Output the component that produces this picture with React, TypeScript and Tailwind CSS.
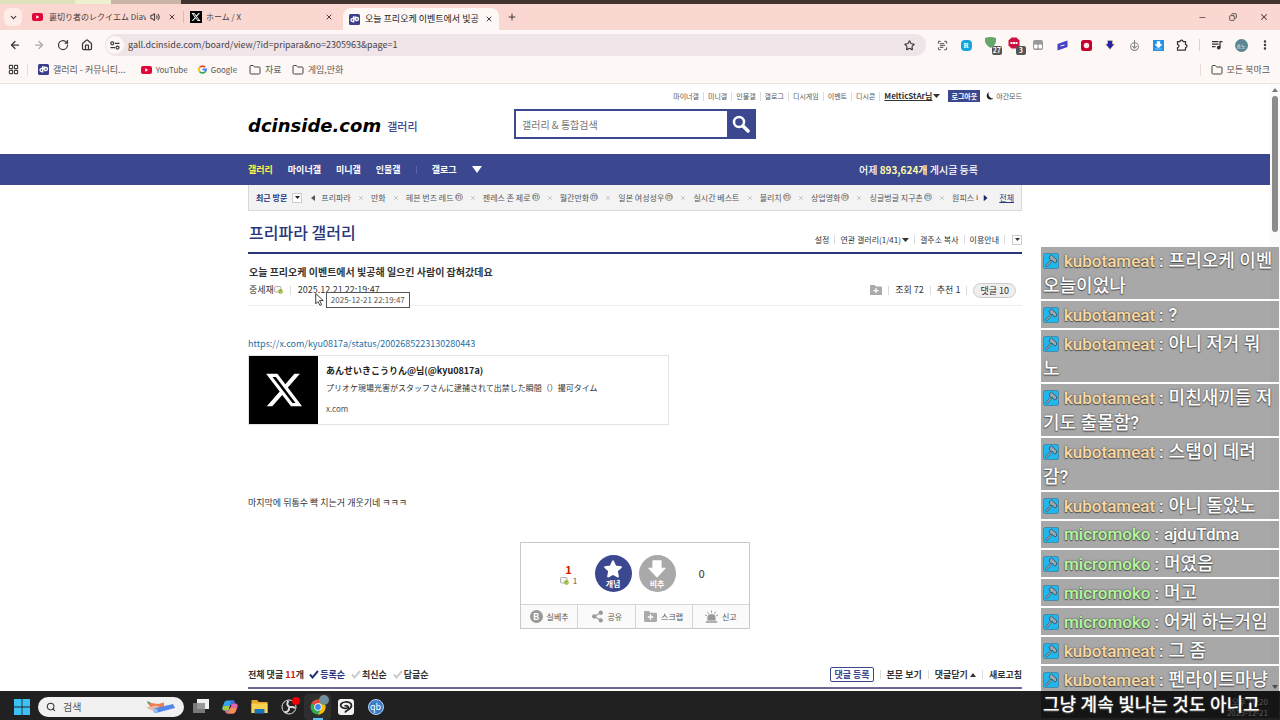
import React from "react";
import {
  ArrowLeft,
  ArrowRight,
  ChevronDown,
  Copy,
  EllipsisVertical,
  Folder,
  House,
  LayoutGrid,
  Minus,
  Plus,
  RotateCw,
  ScanText,
  Search,
  Share2,
  Star,
  Volume2,
  X,
} from "lucide-react";

const topLinks = ["마이너갤", "미니갤", "인물갤", "갤로그", "디시게임", "이벤트", "디시콘"];

const recent = [
  { name: "프리파라", minor: false },
  { name: "만화", minor: false },
  { name: "헤븐 번즈 레드", minor: true },
  { name: "젠레스 존 제로", minor: true },
  { name: "월간만화", minor: true },
  { name: "일본 여성성우", minor: true },
  { name: "실시간 베스트", minor: false },
  { name: "블리치", minor: true },
  { name: "상업영화", minor: true },
  { name: "싱글벙글 지구촌", minor: true },
];

const chat = [
  { user: "kubotameat", lines: ["프리오케 이벤", "오늘이었나"] },
  { user: "kubotameat", lines: ["?"] },
  { user: "kubotameat", lines: ["아니 저거 뭐", "노"] },
  { user: "kubotameat", lines: ["미친새끼들 저", "기도 출몰함?"] },
  { user: "kubotameat", lines: ["스탭이 데려", "감?"] },
  { user: "kubotameat", lines: ["아니 돌았노"] },
  { user: "micromoko", lines: ["ajduTdma"] },
  { user: "micromoko", lines: ["머였음"] },
  { user: "micromoko", lines: ["머고"] },
  { user: "micromoko", lines: ["어케 하는거임"] },
  { user: "kubotameat", lines: ["그 좀"] },
  { user: "kubotameat", lines: ["펜라이트마냥", "그냥 계속 빛나는 것도 아니고"] },
];

const Divider: React.FC = () => <span className="h-[9px] w-px shrink-0 bg-[#dcdcdc]" />;

const Caret: React.FC<{ className?: string }> = ({ className = "h-1 w-[7px]" }) => (
  <svg viewBox="0 0 8 5" preserveAspectRatio="none" className={className} fill="currentColor">
    <path d="M0 0h8L4 5z" />
  </svg>
);

const YouTubeIcon: React.FC = () => (
  <svg viewBox="0 0 22 16" className="h-2 w-[11px] shrink-0">
    <rect width="22" height="16" rx="4" fill="#e0063b" />
    <path d="M8.500 4.500v7l6-3.500z" fill="#fff" />
  </svg>
);

const DcIcon: React.FC = () => (
  <svg viewBox="0 0 22 22" className="size-[11px] shrink-0">
    <rect width="22" height="22" rx="3" fill="#3b3f8c" />
    <path d="M9.500 4v13M9 15H7a3 3 0 0 1 0-6h6M13 5v8M13 7h3a2.500 2.500 0 0 1 0 6h-3" fill="none" stroke="#fff" strokeWidth="2.600" />
  </svg>
);

const XLogo: React.FC<{ className?: string }> = ({ className }) => (
  <svg viewBox="0 0 24 24" className={className} fill="#fff">
    <path d="M18.244 2.250h3.308l-7.227 8.260 8.502 11.240H16.170l-5.214-6.817L4.990 21.750H1.680l7.730-8.835L1.254 2.250H8.080l4.713 6.231zm-1.161 17.520h1.833L7.084 4.126H5.117z" />
  </svg>
);

const FolderPlusIcon: React.FC<{ className?: string }> = ({ className }) => (
  <svg viewBox="0 0 24 20" className={className}>
    <path d="M2 0h7l3 3h10a2 2 0 0 1 2 2v13a2 2 0 0 1-2 2H2a2 2 0 0 1-2-2V2a2 2 0 0 1 2-2z" fill="#aaa" />
    <path d="M12 6v10M7 11h10" stroke="#fff" strokeWidth="2.500" />
  </svg>
);

const MemberIcon: React.FC = () => (
  <svg viewBox="0 0 18 16" className="h-2 w-[9px] shrink-0">
    <rect x="1" y="1" width="13" height="11" rx="2" fill="#f6f6ee" stroke="#999" strokeWidth="1.500" />
    <circle cx="13" cy="11" r="4.500" fill="#8fae1f" />
    <path d="M11 11l2 2 3-3" stroke="#fff" strokeWidth="1.300" fill="none" />
  </svg>
);

const ChromeIcon: React.FC = () => (
  <svg viewBox="0 0 32 32" className="size-4">
    <circle cx="16" cy="16" r="15" fill="#34a853" />
    <path d="M16 16L3 8.500A15 15 0 0 1 29 8.500z" fill="#ea4335" />
    <path d="M16 8.500h13A15 15 0 0 1 16 31l6.500-11z" fill="#fbbc05" />
    <circle cx="16" cy="16" r="7.500" fill="#fff" />
    <circle cx="16" cy="16" r="5.800" fill="#4285f4" />
  </svg>
);

const HammerIcon: React.FC = () => (
  <svg viewBox="0 0 32 32" className="mr-[5px] size-4 shrink-0 self-center">
    <rect x="1" y="1" width="30" height="30" rx="3" fill="#1fb8ee" stroke="#3d7f99" strokeWidth="1.500" />
    <path d="M6 27L18 14" stroke="#35566a" strokeWidth="5" />
    <path d="M6.500 26.500L18 14" stroke="#8fa3ad" strokeWidth="2.500" />
    <path d="M12 8l5-4 10 9v5l-4 2-4-5h-4z" fill="#9ba6ad" stroke="#35566a" strokeWidth="1.800" />
  </svg>
);

const TabStrip: React.FC = () => (
  <div className="flex h-[26px] items-center bg-[#fad7d0] pl-1 text-[#473c3c]">
    <button aria-label="탭 검색" className="flex size-[18px] items-center justify-center rounded-md bg-[#fdece8]">
      <ChevronDown size={9} strokeWidth={3} />
    </button>
    <div className="ml-2.5 flex w-[151px] items-center">
      <YouTubeIcon />
      <span className="ml-1.5 w-[97px] overflow-hidden text-[8px] whitespace-nowrap">裏切り者のレクイエム Diav</span>
      <Volume2 size={10} strokeWidth={2.5} className="ml-1 shrink-0" />
      <button aria-label="탭 닫기" className="ml-2">
        <X size={8} strokeWidth={3} />
      </button>
    </div>
    <span className="h-3 w-px bg-[#dfb9b4]" />
    <div className="ml-1.5 flex w-[143px] items-center">
      <span className="flex size-3 items-center justify-center bg-black">
        <XLogo className="size-2.5" />
      </span>
      <span className="ml-1 flex-1 text-[8px]">ホーム / X</span>
      <button aria-label="탭 닫기">
        <X size={8} strokeWidth={3} />
      </button>
    </div>
    <div className="ml-2.5 flex h-[22px] w-[156px] items-center self-end rounded-t-lg bg-[#fdf8f5] px-1.5">
      <DcIcon />
      <span className="ml-[5px] w-[114px] overflow-hidden text-[9px] whitespace-nowrap text-[#222]">
        오늘 프리오케 이벤트에서 빛공
      </span>
      <button aria-label="탭 닫기" className="ml-auto">
        <X size={8} strokeWidth={3} />
      </button>
    </div>
    <button aria-label="새 탭" className="ml-2">
      <Plus size={10} strokeWidth={2.5} />
    </button>
    <div className="ml-auto flex items-center gap-[22px] pr-[11px]">
      <button aria-label="최소화">
        <Minus size={9} />
      </button>
      <button aria-label="이전 크기로">
        <Copy size={8} strokeWidth={2.5} className="-scale-x-100" />
      </button>
      <button aria-label="닫기">
        <X size={10} strokeWidth={2.5} />
      </button>
    </div>
  </div>
);

const Extensions: React.FC = () => (
  <div className="flex items-center text-[#333]">
    <span className="flex w-6 justify-center">
      <ScanText size={11} strokeWidth={2.5} className="text-[#666]" />
    </span>
    <span className="flex w-6 justify-center">
      <b className="size-[11px] rounded-sm bg-[#16a5dd] text-center font-serif text-[8px] leading-[11px] text-white">R</b>
    </span>
    <span className="relative flex h-4 w-6 justify-center">
      <svg viewBox="0 0 12 12" className="size-[11px]">
        <path d="M0 1q6-2 12 0v4q-1 5-6 7Q1 9 0 5z" fill="#66a56b" />
      </svg>
      <b className="absolute right-0 bottom-[-2px] rounded-xs bg-[#555] px-px text-[7px] leading-[9px] text-white">27</b>
    </span>
    <span className="relative flex h-4 w-6 justify-center">
      <svg viewBox="0 0 24 24" className="size-3">
        <path d="M7 1h10l6 6v10l-6 6H7l-6-6V7z" fill="#ce1140" />
        <path d="M5 12h14" stroke="#fff" strokeWidth="4" strokeDasharray="4 1" />
      </svg>
      <b className="absolute right-0 bottom-[-2px] rounded-xs bg-[#555] px-[3px] text-[7px] leading-[9px] text-white">3</b>
    </span>
    <span className="flex w-6 justify-center">
      <svg viewBox="0 0 20 20" className="size-2.5">
        <rect width="20" height="20" rx="4" fill="#999" />
        <rect x="2" y="9" width="7" height="8" rx="2" fill="#fff" />
        <rect x="11" y="9" width="7" height="8" rx="2" fill="#fff" />
      </svg>
    </span>
    <span className="flex w-6 justify-center">
      <svg viewBox="0 0 22 22" className="size-[11px]">
        <path d="M1 8L21 1v13L1 21z" fill="#4540c8" />
        <path d="M7 12l8-2" stroke="#fff" strokeWidth="2" />
      </svg>
    </span>
    <span className="flex w-6 justify-center">
      <svg viewBox="0 0 22 22" className="size-[11px]">
        <rect width="22" height="22" rx="5" fill="#c5002f" />
        <circle cx="11" cy="11" r="5.500" fill="#ffe4ea" />
      </svg>
    </span>
    <span className="flex w-6 justify-center">
      <svg viewBox="0 0 20 20" className="size-2.5">
        <path d="M5 1h10v7h4l-9 11L1 8h4z" fill="#2b1fb0" stroke="#e8e05a" strokeWidth="1" />
      </svg>
    </span>
    <span className="flex w-6 justify-center">
      <svg viewBox="0 0 20 20" className="size-[11px]" fill="none" stroke="#888" strokeWidth="2">
        <circle cx="10" cy="12" r="7" />
        <path d="M10 0v15M6 11l4 4 4-4" />
      </svg>
    </span>
    <span className="flex w-6 justify-center">
      <svg viewBox="0 0 22 22" className="size-[11px]">
        <rect width="22" height="22" fill="#2391e6" />
        <path d="M8 3h6v6h4l-7 7-7-7h4zM4 18h14" fill="#fff" stroke="#fff" />
      </svg>
    </span>
    <span className="flex w-6 justify-center">
      <svg viewBox="0 0 24 24" className="size-3" fill="none" stroke="currentColor" strokeWidth="2.500" strokeLinejoin="round">
        <path d="M3 5h5a3 3 0 0 1 6 0h5v6a3 3 0 0 1 0 6v5H3v-5a3 3 0 0 0 0-6z" />
      </svg>
    </span>
    <span className="mx-[5px] h-3 w-px bg-[#e3cfce]" />
    <span className="flex w-6 justify-center">
      <svg viewBox="0 0 24 24" className="size-3" fill="none" stroke="currentColor" strokeWidth="2.500">
        <path d="M2 5h13M2 10h13M2 15h7M18 17V5h5" />
        <circle cx="15.500" cy="17" r="2.500" fill="currentColor" />
      </svg>
    </span>
    <span className="flex w-6 justify-center">
      <span className="size-[13px] rounded-full bg-[#5b8795] text-center text-[5px] leading-[13px] text-white">쇼노</span>
    </span>
    <span className="flex w-6 justify-center">
      <EllipsisVertical size={12} strokeWidth={3} />
    </span>
  </div>
);

const BrowserBar: React.FC = () => (
  <header className="shrink-0 bg-[#fdf8f5]">
    <div className="flex h-1 bg-[#43332e]">
      <span className="w-[75px] bg-[#dfe3bd]" />
      <span className="w-9 bg-[#eef0cf]" />
      <span className="w-[70px] bg-[#cbb5a8]" />
    </div>
    <TabStrip />
    <div className="flex h-[30px] items-center pr-[3px] pl-[9px] text-[#3a3a3a]">
      <div className="flex gap-3">
        <button aria-label="뒤로">
          <ArrowLeft size={12} strokeWidth={2.5} />
        </button>
        <button aria-label="앞으로" className="text-[#aaa]">
          <ArrowRight size={12} strokeWidth={2.5} />
        </button>
        <button aria-label="새로고침">
          <RotateCw size={12} strokeWidth={2.5} />
        </button>
        <button aria-label="홈">
          <House size={12} strokeWidth={2.5} />
        </button>
      </div>
      <div className="mr-1 ml-3 flex h-[22px] flex-1 items-center rounded-full bg-[#efe4e8] pr-[11px] pl-px">
        <span className="flex size-[18px] items-center justify-center rounded-full bg-[#fdf8f5]">
          <svg viewBox="0 0 20 18" className="h-[9px] w-2.5" fill="none" stroke="currentColor" strokeWidth="2.500">
            <circle cx="4.500" cy="4.500" r="3" />
            <circle cx="15" cy="13" r="3" />
            <path d="M10 4.500h9M1 13h9" />
          </svg>
        </span>
        <input
          aria-label="주소창"
          className="ml-1 flex-1 bg-transparent text-[9px] leading-4 text-[#4a4347] outline-none"
          defaultValue="gall.dcinside.com/board/view/?id=pripara&no=2305963&page=1"
        />
        <Star size={11} strokeWidth={2.5} />
      </div>
      <Extensions />
    </div>
    <div className="flex h-6 items-center border-b border-[#ece6e3] pb-1 pl-2 text-[8px] text-[#5b5656]">
      <LayoutGrid size={11} strokeWidth={2.5} className="text-[#444]" />
      <span className="ml-2 h-3 w-px bg-[#eadbd9]" />
      <a href="#" className="ml-2.5 flex items-center gap-1 text-[9px]">
        <DcIcon />
        갤러리 - 커뮤니티...
      </a>
      <a href="#" className="ml-[15px] flex items-center gap-1">
        <YouTubeIcon />
        YouTube
      </a>
      <a href="#" className="ml-2.5 flex items-center gap-1">
        <svg viewBox="0 0 20 20" className="size-[9px]" fill="none" strokeWidth="4">
          <path d="M4 5a8 8 0 0 1 12 0" stroke="#ea4335" />
          <path d="M4 5a8 8 0 0 0 0 10" stroke="#fbbc05" />
          <path d="M4 15a8 8 0 0 0 12 0" stroke="#34a853" />
          <path d="M16 15a8 8 0 0 0 2-5h-8" stroke="#4285f4" />
        </svg>
        Google
      </a>
      <a href="#" className="ml-3 flex items-center gap-1 text-[9px]">
        <Folder size={12} className="text-[#444]" />
        자료
      </a>
      <a href="#" className="ml-2.5 flex items-center gap-1 text-[9px]">
        <Folder size={12} className="text-[#444]" />
        게임,만화
      </a>
      <span className="ml-auto h-3 w-px bg-[#eadbd9]" />
      <a href="#" className="mr-2.5 ml-2.5 flex items-center gap-1 text-[9px]">
        <Folder size={12} className="text-[#444]" />
        모든 북마크
      </a>
    </div>
  </header>
);

const SiteHeader: React.FC = () => (
  <div className="mx-auto w-full max-w-[774px] pt-1.5 pb-[15px]">
    <div className="flex h-3 items-center justify-end gap-1 text-[7px] text-[#555]">
      {topLinks.map((t) => (
        <React.Fragment key={t}>
          <a href="#">{t}</a>
          <Divider />
        </React.Fragment>
      ))}
      <a href="#" className="flex items-center gap-px text-[8px] font-bold text-[#333]">
        <span className="underline">MelticStAr님</span>
        <Caret />
      </a>
      <button className="ml-1 h-3 bg-[#3b4890] px-[3px] font-bold text-white">로그아웃</button>
      <button className="ml-0.5 flex items-center gap-0.5">
        <svg viewBox="0 0 16 16" className="size-2" fill="#222">
          <path d="M6 0a8 8 0 1 0 9 13A9 9 0 0 1 6 0z" />
        </svg>
        야간모드
      </button>
    </div>
    <div className="mt-[7px] flex h-[30px] items-center">
      <a href="#" className="flex w-[266px] items-center gap-1.5 pt-1">
        <span className="font-['DejaVu_Sans'] text-[18px] leading-[18px] font-bold text-black italic">dcinside.com</span>
        <span className="text-[11px] leading-4 font-medium text-[#3b4890]">갤러리</span>
      </a>
      <form className="flex h-[30px] w-[242px] bg-[#3b4890] p-0.5" onSubmit={(e) => e.preventDefault()}>
        <input
          aria-label="검색"
          placeholder="갤러리 & 통합검색"
          className="w-[211px] bg-white px-1.5 text-[10px] outline-none placeholder:text-[#777]"
        />
        <button aria-label="검색하기" className="flex flex-1 items-center justify-center text-white">
          <svg viewBox="0 0 18 18" className="size-[18px]" fill="none" stroke="currentColor">
            <circle cx="7" cy="7" r="5" strokeWidth="2.500" />
            <path d="M11 11l5 5" strokeWidth="3.500" strokeLinecap="round" />
          </svg>
        </button>
      </form>
    </div>
  </div>
);

const RecentBar: React.FC = () => (
  <div className="mx-auto flex h-[26px] w-full max-w-[774px] items-center border border-t-0 border-[#d8d8d8] bg-[#f3f3f3] px-[7px] text-[8px] whitespace-nowrap text-[#555]">
    <b className="text-[#29367c]">최근 방문</b>
    <button
      aria-label="최근 방문 열기"
      className="ml-[5px] flex size-2.5 items-center justify-center border border-[#ccc] bg-white text-[#222]"
    >
      <Caret className="h-[3px] w-[5px]" />
    </button>
    <button aria-label="이전" className="ml-2">
      <Caret className="h-1 w-[6px] rotate-90" />
    </button>
    <div className="mr-1 ml-[5px] flex flex-1 items-center justify-between overflow-hidden">
      {recent.map((r) => (
        <React.Fragment key={r.name}>
          <a href="#" className="flex items-center gap-px">
            {r.name}
            {r.minor && (
              <span className="mb-0.5 size-2 rounded-full border border-[#999] text-center text-[6px] leading-[5px]">m</span>
            )}
          </a>
          <X size={6} className="text-[#999]" />
        </React.Fragment>
      ))}
      <a href="#" className="w-[26px] overflow-hidden">
        원피스 버
      </a>
    </div>
    <button aria-label="다음" className="text-[#1d2660]">
      <Caret className="h-1 w-[7px] -rotate-90" />
    </button>
    <a href="#" className="ml-2.5 text-[#29367c] underline">
      전체
    </a>
  </div>
);

const voteActions = [
  {
    label: "실베추",
    icon: <b className="size-[13px] rounded-full bg-[#999] text-center text-[9px] leading-[13px] text-white">B</b>,
  },
  {
    label: "공유",
    icon: <Share2 size={13} fill="#999" className="text-[#999]" />,
  },
  { label: "스크랩", icon: <FolderPlusIcon className="h-[11px] w-[13px]" /> },
  {
    label: "신고",
    icon: (
      <svg viewBox="0 0 24 24" className="size-[13px]" fill="#999" stroke="#999">
        <path d="M5 19v-5a7 6 0 0 1 14 0v5zM2 21h20v2H2z" />
        <path d="M12 1v4M4 3l3 4M20 3l-3 4M0 9l4 2M24 9l-4 2" strokeWidth="1.800" />
      </svg>
    ),
  },
];

const VoteBox: React.FC = () => (
  <div className="mx-auto mt-[31px] w-[230px] border border-[#c9c9c9] text-[8px] text-[#555]">
    <div className="flex h-[61px] items-center justify-center gap-[7px]">
      <div className="flex w-[60px] flex-col items-center pl-[22px]">
        <b className="text-[11px] leading-[14px] text-[#d31900]">1</b>
        <span className="flex items-center gap-1 leading-[9px]">
          <MemberIcon />1
        </span>
      </div>
      <button className="flex size-[37px] flex-col items-center justify-center rounded-full bg-[#3b4890] font-bold text-white">
        <svg viewBox="0 0 24 24" className="size-5" fill="#fff" stroke="#fff" strokeLinejoin="round" strokeWidth="2">
          <path d="M12 2.500l3 6.300 6.700.9-4.900 4.700 1.200 6.800L12 18l-6 3.200 1.200-6.800L2.300 9.700l6.700-.9z" />
        </svg>
        <span className="leading-[9px]">개념</span>
      </button>
      <button className="flex size-[37px] flex-col items-center justify-center rounded-full bg-[#a9a9a9] font-bold text-white">
        <svg viewBox="0 0 24 24" className="size-5" fill="#fff" stroke="#fff" strokeLinejoin="round">
          <path d="M7 2h10v9h5L12 22 2 11h5z" />
        </svg>
        <span className="leading-[9px]">비추</span>
      </button>
      <div className="w-[60px] pl-4 text-[11px] font-medium">0</div>
    </div>
    <div className="flex h-6 divide-x divide-[#d5d5d5] border-t border-[#d5d5d5] bg-[#fafafa]">
      {voteActions.map((a) => (
        <button key={a.label} className="flex flex-1 items-center justify-center gap-1">
          {a.icon}
          {a.label}
        </button>
      ))}
    </div>
  </div>
);

const Post: React.FC = () => (
  <main className="mx-auto w-full max-w-[774px] text-[9px] text-[#333]">
    <div className="flex h-[43px] items-center justify-between border-b-2 border-[#29367c]">
      <h1 className="pl-px text-[16px] leading-6 font-medium text-[#29367c]">프리파라 갤러리</h1>
      <div className="mt-4 flex items-center gap-[5px] text-[8px]">
        <a href="#">설정</a>
        <Divider />
        <a href="#" className="flex items-center gap-px">
          연관 갤러리(1/41)
          <Caret />
        </a>
        <Divider />
        <a href="#">갤주소 복사</a>
        <Divider />
        <a href="#">이용안내</a>
        <Divider />
        <button aria-label="더보기" className="ml-0.5 flex size-2.5 items-center justify-center border border-[#ccc]">
          <Caret className="h-[3px] w-[5px]" />
        </button>
      </div>
    </div>

    <div className="border-b border-[#eee] pt-2.5 pb-[7px]">
      <h2 className="pl-px text-[10px] leading-4 font-bold">오늘 프리오케 이벤트에서 빛공해 일으킨 사람이 잡혀갔데요</h2>
      <div className="mt-0.5 flex h-4 items-center pl-px">
        <span>중세재</span>
        <MemberIcon />
        <span className="mx-[7px] h-[9px] w-px bg-[#dcdcdc]" />
        <span className="relative">
          2025.12.21 22:19:47
          <span className="absolute top-[9px] left-7 border border-[#555] bg-white px-1 text-[8px] leading-[14px] whitespace-nowrap text-[#555]">
            2025-12-21 22:19:47
          </span>
          <svg viewBox="0 0 16 24" className="absolute top-2.5 left-[17px] h-[13px] w-[9px]">
            <path d="M1 1v19l4-4 4 7 3-2-4-7h7z" fill="#fff" stroke="#222" strokeWidth="1.600" />
          </svg>
        </span>
        <div className="ml-auto flex items-center gap-1.5 pr-1.5">
          <FolderPlusIcon className="h-2.5 w-3" />
          <Divider />
          <span>조회 72</span>
          <Divider />
          <span>추천 1</span>
          <Divider />
          <button className="h-[15px] rounded-full border border-[#ccc] bg-[#eee] px-1.5 leading-[13px]">댓글 10</button>
        </div>
      </div>
    </div>

    <a href="#" className="mt-8 block leading-3 text-[#1d6fa5]">
      https://x.com/kyu0817a/status/2002685223130280443
    </a>
    <a href="#" className="mt-[5px] flex h-[70px] w-[421px] border border-[#e3e3e3]">
      <span className="flex w-[69px] items-center justify-center bg-black">
        <XLogo className="size-10" />
      </span>
      <span className="ml-2 flex flex-col pt-2">
        <b className="leading-[14px] text-[#222]">あんせいきこうりん@님(@kyu0817a)</b>
        <span className="mt-[3px] text-[8px] leading-[14px]">プリオケ現場光害がスタッフさんに逮捕されて出禁した瞬間（）撮可タイム</span>
        <span className="mt-2 text-[8px] leading-[12px] text-[#555]">x.com</span>
      </span>
    </a>
    <p className="mt-[70px] leading-4">마지막에 뒤통수 빡 치는거 개웃기네 ㅋㅋㅋ</p>

    <VoteBox />

    <div className="mt-[37px] flex h-[23px] items-center border-b-2 border-[#6c6893] pb-1 font-bold">
      <span className="mr-px">
        전체 댓글 <span className="text-[#d31900]">11</span>개
      </span>
      {["등록순", "최신순", "답글순"].map((s, i) => (
        <button key={s} className={i === 0 ? "ml-1 flex items-center gap-px text-[#29367c]" : "ml-1.5 flex items-center gap-px"}>
          <svg
            viewBox="0 0 20 18"
            className={i === 0 ? "h-[9px] w-2.5 text-[#29367c]" : "h-[9px] w-2.5 text-[#ccc]"}
            fill="none"
            stroke="currentColor"
            strokeWidth="4"
          >
            <path d="M2 9l5 6L18 2" />
          </svg>
          {s}
        </button>
      ))}
      <div className="ml-auto flex items-center gap-1.5">
        <button className="h-[15px] rounded-xs border border-[#3b4890] px-[3px] leading-[13px] text-[#3b4890]">댓글 등록</button>
        <Divider />
        <button>본문 보기</button>
        <Divider />
        <button className="flex items-center gap-0.5">
          댓글닫기
          <Caret className="h-1 w-[6px] rotate-180" />
        </button>
        <Divider />
        <button>새로고침</button>
      </div>
    </div>
  </main>
);

const Scrollbar: React.FC = () => (
  <div className="flex w-2.5 shrink-0 flex-col items-center justify-between bg-[#fafafa] pt-1 pb-0.5 text-[#777]">
    <div className="flex flex-col items-center gap-1">
      <Caret className="h-1 w-[6px] rotate-180" />
      <span className="h-[136px] w-1.5 rounded-full bg-[#8b8b8b]" />
    </div>
    <Caret className="h-1 w-[6px]" />
  </div>
);

const Chat: React.FC = () => (
  <aside className="absolute top-[247px] right-px w-[238px] overflow-hidden font-['Roboto','Noto_Sans_CJK_KR',sans-serif] text-[18px] leading-[25px] font-medium text-white [text-shadow:0_0_2px_#444,0_1px_1px_#555]">
    <ul className="flex flex-col gap-0.5">
      {chat.map((c, i) => (
        <li key={i} className="bg-black/34 px-0.5 pt-px pb-px whitespace-nowrap">
          <div className="flex h-[25px] items-baseline">
            <HammerIcon />
            <span className={c.user === "kubotameat" ? "text-[17px] text-[#fcd9a0]" : "text-[17px] text-[#b5f79c]"}>
              {c.user}
            </span>
            <span className="ml-1 text-[17px]">:</span>
            <span className={c.lines[0] === "ajduTdma" ? "ml-[5px] text-[17px]" : "ml-[5px]"}>{c.lines[0]}</span>
          </div>
          {c.lines[1] && <div className="h-[25px]">{c.lines[1]}</div>}
        </li>
      ))}
    </ul>
  </aside>
);

const Taskbar: React.FC = () => (
  <footer className="flex h-[29px] shrink-0 items-center bg-[#212121] pt-0.5 pr-3 pl-3.5">
    <button aria-label="시작">
      <svg viewBox="0 0 16 16" className="size-4" fill="#3cc1f3">
        <path d="M0 0h7.600v7.600H0zM8.400 0H16v7.600H8.400zM0 8.400h7.600V16H0zM8.400 8.400H16V16H8.400z" />
      </svg>
    </button>
    <label className="ml-2 flex h-5 w-[146px] items-center rounded-full bg-[#f1f1f1] px-2 text-[#333]">
      <Search size={10} strokeWidth={2.5} />
      <input aria-label="검색" placeholder="검색" className="ml-[7px] w-20 bg-transparent text-[10px] placeholder:text-[#555]" />
      <svg viewBox="0 0 60 28" className="ml-auto h-3.5 w-[30px] shrink-0">
        <path d="M4 5l20 3 12-3v8l-14 6L8 14z" fill="#ee7c53" />
        <path d="M0 15l20-4 20 8-20 6z" fill="#e5b9a4" />
        <path d="M2 2l8 3-6 4z" fill="#5aa870" />
        <path d="M16 17l38-9 4 8-38 10z" fill="#5488e8" />
        <circle cx="19" cy="22" r="4.500" fill="#96bcfa" />
      </svg>
    </label>
    <div className="ml-0.5 flex items-center">
      <button aria-label="작업 보기" className="flex w-[29px] items-center justify-center">
        <svg viewBox="0 0 32 30" className="h-[15px] w-4">
          <rect x="8" width="24" height="20" fill="#f0f0f0" />
          <rect y="8" width="24" height="20" fill="#888" opacity=".85" />
        </svg>
      </button>
      <button aria-label="Copilot" className="flex w-[30px] items-center justify-center">
        <svg viewBox="0 0 32 32" className="size-4">
          <path d="M10 3h12c3 0 3 3 4 6h-8l-5 14H5c-4 0-5-3-4-7l3-8c1-3 3-5 6-5z" fill="#34a4ea" />
          <path d="M22 29H10c-3 0-3-3-4-6h8l5-14h8c4 0 5 3 4 7l-3 8c-1 3-3 5-6 5z" fill="#e564a5" />
          <path d="M3 14l-2 5c0 3 2 4 5 4h7l3-9z" fill="#a6c94a" />
          <path d="M14 23l2-5h13l-2 6c-1 3-3 5-5 5H10c3 0 4-3 4-6z" fill="#f0904c" />
          <path d="M17 3h5c3 0 3 3 4 6h-8z" fill="#4b62e6" />
          <path d="M14 19l3-7h2l-3 7z" fill="#212121" />
        </svg>
      </button>
      <button aria-label="파일 탐색기" className="flex w-[29px] items-center justify-center">
        <svg viewBox="0 0 34 30" className="h-[15px] w-[17px]">
          <path d="M1 2h11l4 4h17v22H1z" fill="#e8a92c" />
          <path d="M1 9h32v19H1z" fill="#fbd153" />
          <path d="M7 20h20v9H7z" fill="#1873b8" />
        </svg>
      </button>
      <button aria-label="OBS" className="relative flex w-[30px] items-center justify-center">
        <svg viewBox="0 0 32 32" className="size-4" fill="none" stroke="#ddd">
          <circle cx="16" cy="16" r="14" fill="#222" strokeWidth="2" />
          <path d="M15 4c-5 5-2 10 2 12M28 18c-5-4-10-1-11-2M7 26c6 1 10-4 9-9" strokeWidth="4" />
        </svg>
        <span className="absolute -top-0.5 right-1 size-2 rounded-full bg-[#ef0008]" />
      </button>
      <button aria-label="Chrome" className="relative flex h-[26px] w-[27px] items-center justify-center rounded bg-[#2e2e2e]">
        <ChromeIcon />
        <span className="absolute top-px right-0.5 size-2.5 rounded-full bg-[#6f9099]" />
        <span className="absolute bottom-0 h-0.5 w-2.5 bg-[#5cc0f5]" />
      </button>
      <button aria-label="Clip Studio" className="flex w-[30px] items-center justify-center">
        <svg viewBox="0 0 32 32" className="size-4" fill="none" stroke="#222" strokeWidth="3.500">
          <rect width="32" height="32" rx="6" fill="#f2f2f2" stroke="none" />
          <path d="M14 27c2-5 13-6 13-14 0-6-7-8-13-7-8 1-10 6-8 9s8 4 13 3-1-6-6-4" />
        </svg>
      </button>
      <button aria-label="qBittorrent" className="flex w-[29px] items-center justify-center">
        <span className="size-4 rounded-full border border-[#b5d3f5] bg-[#3b7ccb] text-center text-[9px] leading-[13px] text-white">
          qb
        </span>
      </button>
    </div>
    <div className="ml-auto text-right text-[8px] leading-[11px] text-[#888]">
      <div>오후 10:20</div>
      <div>2025-12-21</div>
    </div>
  </footer>
);

const App: React.FC = () => {
  return (
    <div className="relative flex h-screen flex-col overflow-hidden bg-white font-['Noto_Sans_CJK_KR','Noto_Sans_CJK_JP',sans-serif]">
      <BrowserBar />
      <div className="flex min-h-0 flex-1">
        <div className="min-w-0 flex-1 overflow-hidden">
          <SiteHeader />
          <nav className="bg-[#3b4890]">
            <div className="mx-auto flex h-[31px] w-full max-w-[774px] items-center gap-[15px] text-[9px] font-bold text-white">
              <a href="#" className="text-[#fff244]">
                갤러리
              </a>
              <a href="#">마이너갤</a>
              <a href="#">미니갤</a>
              <a href="#">인물갤</a>
              <span className="h-2 w-px bg-[#5a66ab]" />
              <a href="#">갤로그</a>
              <button aria-label="전체 메뉴">
                <Caret className="h-[7px] w-2.5" />
              </button>
              <span className="mr-11 ml-auto text-[10px] font-medium">
                어제 <b className="text-[#fdfbaa]">893,624개</b> 게시글 등록
              </span>
            </div>
          </nav>
          <RecentBar />
          <Post />
        </div>
        <Scrollbar />
      </div>
      <Taskbar />
      <Chat />
    </div>
  );
};

export default App;
